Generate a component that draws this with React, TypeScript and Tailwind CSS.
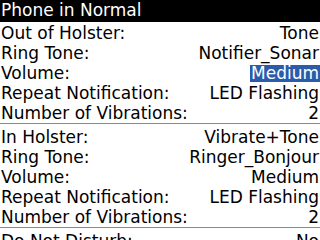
const font = { fontFamily: '"DejaVu Sans", "Noto Sans", sans-serif' }

type Row = { label: string; value: string; selected?: boolean }

const outOfHolster: Row[] = [
  { label: "Out of Holster:", value: "Tone" },
  { label: "Ring Tone:", value: "Notifier_Sonar" },
  { label: "Volume:", value: "Medium", selected: true },
  { label: "Repeat Notification:", value: "LED Flashing" },
  { label: "Number of Vibrations:", value: "2" },
]

const inHolster: Row[] = [
  { label: "In Holster:", value: "Vibrate+Tone" },
  { label: "Ring Tone:", value: "Ringer_Bonjour" },
  { label: "Volume:", value: "Medium" },
  { label: "Repeat Notification:", value: "LED Flashing" },
  { label: "Number of Vibrations:", value: "2" },
]

function Field({ row }: { row: Row }) {
  return (
    <div className="flex h-[20px] items-center justify-between pl-[1px] pr-[1px] leading-[19px] whitespace-nowrap">
      <span>{row.label}</span>
      <span className={row.selected ? "-mr-[1px] bg-[#2a5cab] pl-[1px] pr-[1px] leading-[17px] text-white" : ""}>
        {row.value}
      </span>
    </div>
  )
}

export default function App() {
  return (
    <div className="h-[240px] w-[320px] overflow-hidden bg-white text-[17px] text-black" style={font}>
      <div className="h-[22px] bg-black pl-[1px] leading-[20px] text-white">Phone in Normal</div>
      <div className="border-b border-[#8a8a8a] pt-[1px]">
        {outOfHolster.map((r, i) => (
          <Field key={i} row={r} />
        ))}
      </div>
      <div className="border-b border-[#8a8a8a] pt-[3px]">
        {inHolster.map((r, i) => (
          <Field key={i} row={r} />
        ))}
      </div>
      <div className="pt-[3px]">
        <Field row={{ label: "Do Not Disturb:", value: "No" }} />
      </div>
    </div>
  )
}
